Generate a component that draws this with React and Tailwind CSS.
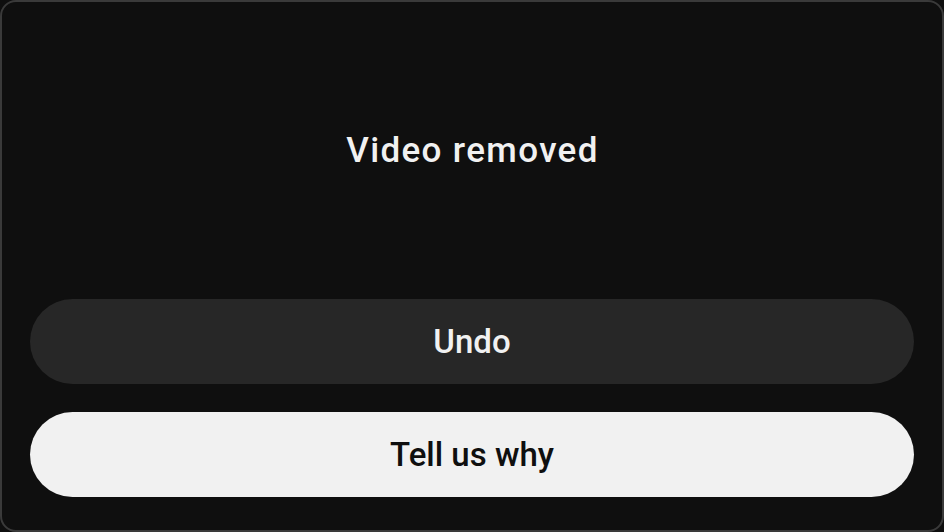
export default function App() {
  return (
    <div className="w-[944px] h-[532px] bg-[#0f0f0f]" style={{ fontFamily: 'Roboto, "Liberation Sans", sans-serif' }}>
      <div className="w-full h-full flex flex-col border-2 border-[#3a3a3a] rounded-[16px] bg-[#0f0f0f] px-[28px] pb-[33px]">
        <div className="flex-1 flex items-center justify-center">
          <span className="text-[35px] font-medium text-[#f1f1f1] leading-none tracking-[1.35px] pl-[1px]">Video removed</span>
        </div>
        <div className="flex flex-col gap-[28px]">
          <button className="h-[85px] w-full rounded-full bg-[#272727] text-[#f1f1f1] text-[33px] font-medium flex items-center justify-center">
            Undo
          </button>
          <button className="h-[85px] w-full rounded-full bg-[#f1f1f1] text-[#0f0f0f] text-[33px] font-medium flex items-center justify-center">
            Tell us why
          </button>
        </div>
      </div>
    </div>
  );
}
